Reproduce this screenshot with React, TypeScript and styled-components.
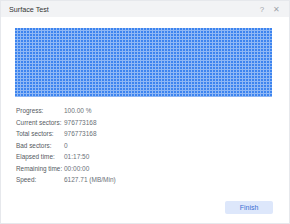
import React from "react";
import styled, { createGlobalStyle } from "styled-components";

const Global = createGlobalStyle`
  html, body { margin: 0; padding: 0; background: #ffffff; }
  body { font-family: "Liberation Sans", Arial, sans-serif; }
`;

const Dialog = styled.div`
  width: 290px;
  height: 224px;
  box-sizing: border-box;
  border: 1px solid #e6e8ec;
  display: flex;
  flex-direction: column;
  background: #fff;
`;

const TitleBar = styled.div`
  height: 16px;
  background: #f2f3f5;
  display: flex;
  align-items: center;
  padding: 0 6px 0 8px;
  flex-shrink: 0;
`;

const Title = styled.div`
  flex: 1;
  font-size: 7.2px;
  color: #333;
`;

const TitleButton = styled.span`
  font-size: 8px;
  color: #a0a4aa;
  width: 14px;
  text-align: center;
`;

const Body = styled.div`
  flex: 1;
  display: flex;
  flex-direction: column;
  padding: 11px 16px 9px 14px;
`;

const Grid = styled.div`
  height: 69px;
  margin-right: 1px;
  background-color: #3d84ef;
  background-image:
    linear-gradient(to right, transparent 2px, #8fb8f5 2px),
    linear-gradient(to bottom, transparent 2px, #8fb8f5 2px);
  background-size: 3px 3px, 3px 3px;
`;

const Stats = styled.div`
  display: grid;
  grid-template-columns: 48px auto;
  margin-top: 8px;
  margin-left: 1px;
`;

const Label = styled.div`
  font-size: 6.4px;
  line-height: 11.5px;
  color: #555a62;
  white-space: nowrap;
`;

const Value = styled.div`
  font-size: 6.5px;
  line-height: 11.5px;
  color: #6b7078;
  white-space: nowrap;
`;

const Footer = styled.div`
  margin-top: auto;
  display: flex;
  justify-content: flex-end;
`;

const Button = styled.button`
  width: 48px;
  height: 13px;
  border: none;
  border-radius: 2px;
  background: #dde7fb;
  color: #3c6fd3;
  font-family: inherit;
  font-size: 7px;
  padding: 0;
`;

const rows: [string, string][] = [
  ["Progress:", "100.00 %"],
  ["Current sectors:", "976773168"],
  ["Total sectors:", "976773168"],
  ["Bad sectors:", "0"],
  ["Elapsed time:", "01:17:50"],
  ["Remaining time:", "00:00:00"],
  ["Speed:", "6127.71 (MB/Min)"],
];

export default function App() {
  return (
    <>
      <Global />
      <Dialog>
        <TitleBar>
          <Title>Surface Test</Title>
          <TitleButton>?</TitleButton>
          <TitleButton>✕</TitleButton>
        </TitleBar>
        <Body>
          <Grid />
          <Stats>
            {rows.map(([l, v]) => (
              <React.Fragment key={l}>
                <Label>{l}</Label>
                <Value>{v}</Value>
              </React.Fragment>
            ))}
          </Stats>
          <Footer>
            <Button>Finish</Button>
          </Footer>
        </Body>
      </Dialog>
    </>
  );
}
